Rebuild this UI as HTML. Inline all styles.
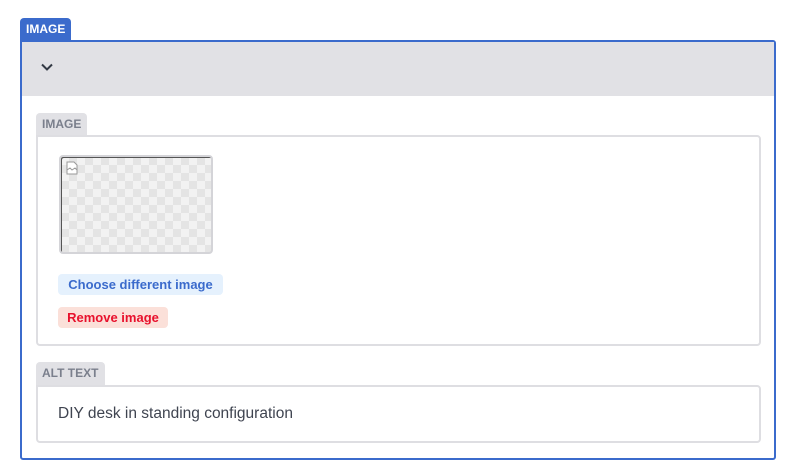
<!DOCTYPE html>
<html><head><style>
*{box-sizing:border-box;margin:0;padding:0}
body{width:796px;height:475px;background:#fff;font-family:"Liberation Sans",sans-serif;position:relative;overflow:hidden}
.a{position:absolute}
.tab{font-weight:bold;font-size:12px;line-height:22px;padding:0 6px;border-radius:4px 4px 0 0}
</style></head><body>
<div class="a tab" style="left:20px;top:18px;width:51px;height:23px;background:#3b6bcc;color:#fff;">IMAGE</div>
<div class="a" style="left:20px;top:40px;width:756px;height:420px;border:2px solid #3b6bcc;border-radius:0 3px 3px 3px"></div>
<div class="a" style="left:22px;top:42px;width:752px;height:54px;background:#e1e1e5"></div>
<svg class="a" style="left:40px;top:62px" width="14" height="10" viewBox="0 0 14 10"><path d="M2 2.5 L7 7.5 L12 2.5" fill="none" stroke="#333a45" stroke-width="2"/></svg>
<div class="a tab" style="left:36px;top:113px;width:51px;height:23px;background:#e1e1e5;color:#7a7f8c;">IMAGE</div>
<div class="a" style="left:36px;top:135px;width:725px;height:211px;border:2px solid #dedee2;border-radius:0 4px 4px 4px"></div>
<div class="a" style="left:59px;top:155px;width:154px;height:99px;border:2px solid #d4d4d8;border-radius:4px;background-color:#f2f2f2;background-image:linear-gradient(45deg,#e4e4e4 25%,transparent 25%,transparent 75%,#e4e4e4 75%),linear-gradient(45deg,#e4e4e4 25%,transparent 25%,transparent 75%,#e4e4e4 75%);background-size:16px 16px;background-position:0 0,8px 8px;box-shadow:inset 1px 1px 0 #555"></div>
<svg class="a" style="left:66px;top:161px" width="12" height="14" viewBox="0 0 12 14"><path d="M1 1H8L11 4V13H1Z" fill="#fff" stroke="#999"/><path d="M1 9L4 7L6 9L9 7L11 9" fill="none" stroke="#999"/></svg>
<div class="a" style="left:58px;top:274px;width:165px;height:21px;background:#e5f1fd;border-radius:4px;color:#3b6bcc;font-weight:bold;font-size:13px;line-height:21px;text-align:center">Choose different image</div>
<div class="a" style="left:58px;top:307px;width:110px;height:21px;background:#fbe0d9;border-radius:4px;color:#e8112d;font-weight:bold;font-size:13px;line-height:21px;text-align:center">Remove image</div>
<div class="a tab" style="left:36px;top:362px;width:69px;height:24px;background:#e1e1e5;color:#7a7f8c;">ALT TEXT</div>
<div class="a" style="left:36px;top:385px;width:725px;height:58px;border:2px solid #dedee2;border-radius:0 4px 4px 4px"></div>
<div class="a" style="left:58px;top:404px;font-size:15.5px;color:#3f4450;line-height:20px">DIY desk in standing configuration</div>
</body></html>
